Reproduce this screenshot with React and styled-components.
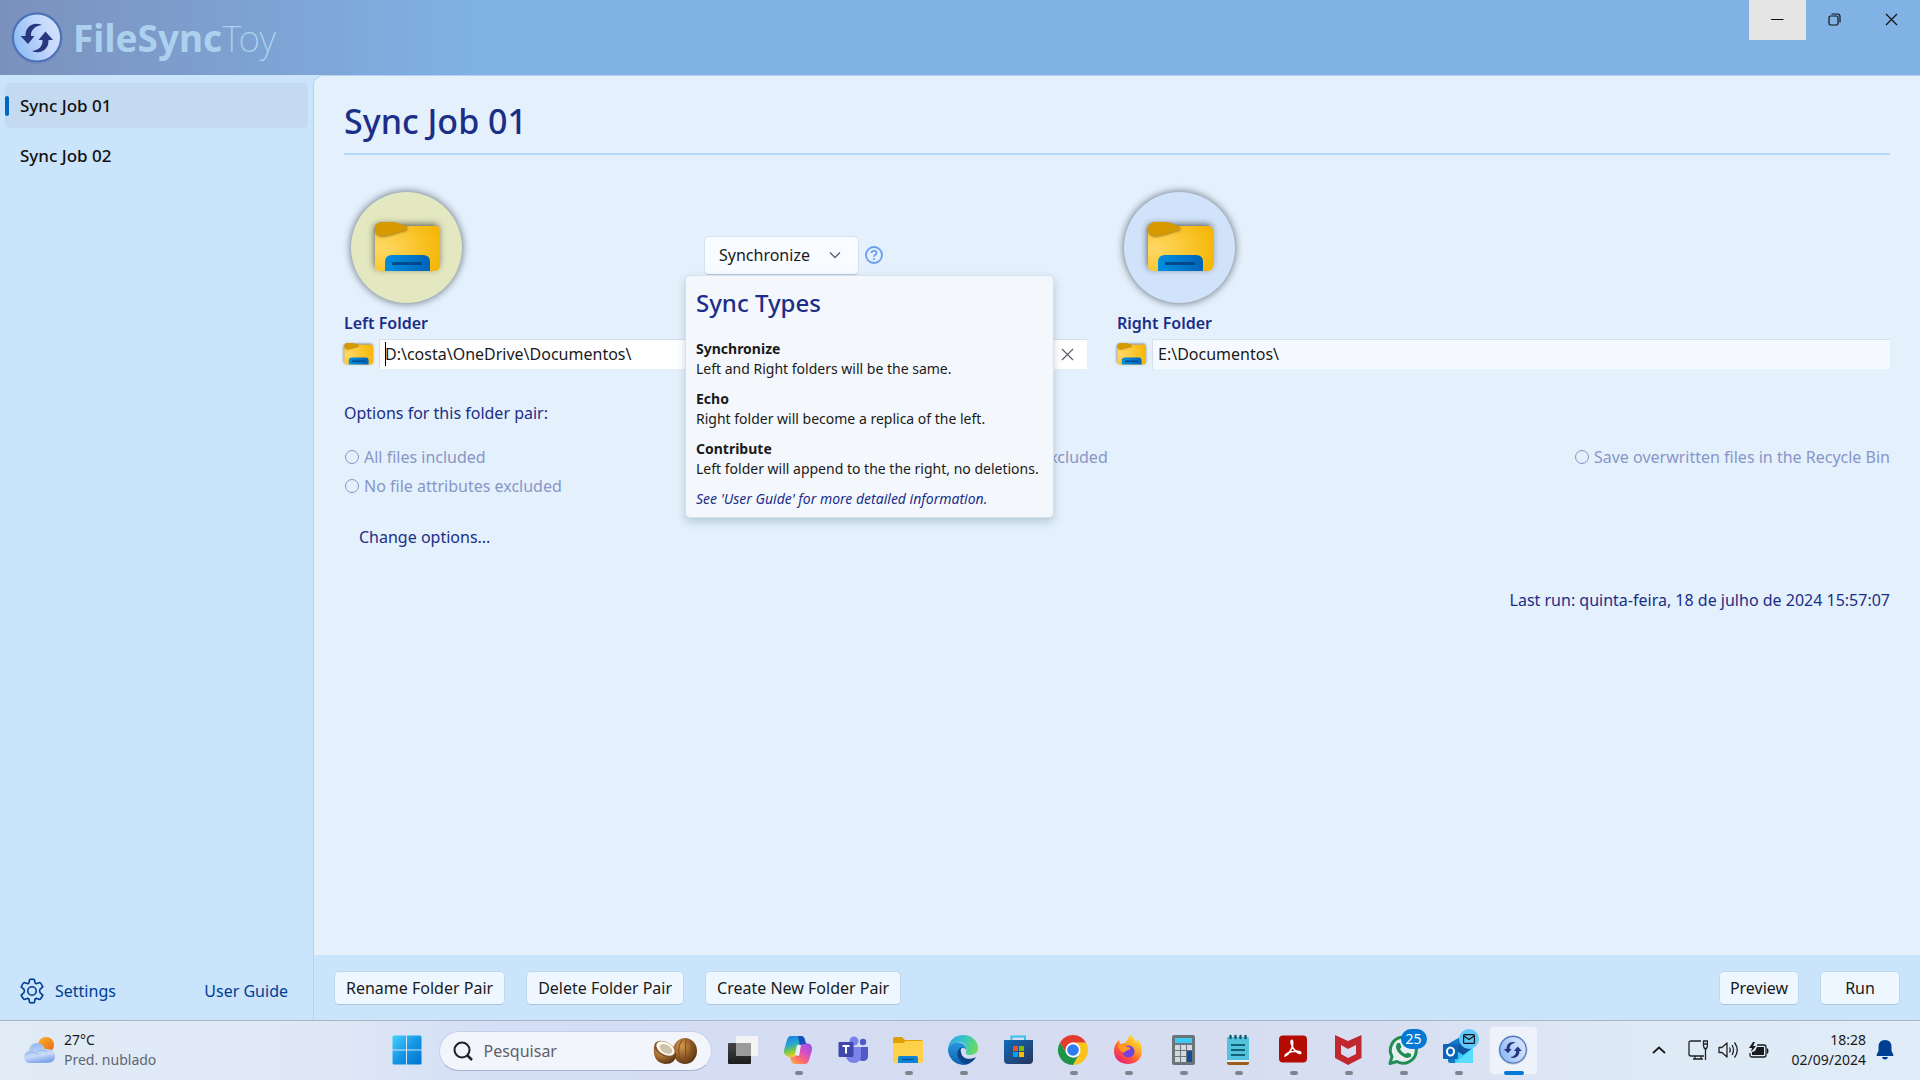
import React, { useId } from "react";
import styled, { createGlobalStyle, css } from "styled-components";

const GlobalStyle = createGlobalStyle`
  *, *::before, *::after { box-sizing: border-box; }
  body { margin: 0; background: #cae4fb; }
  body, button, input, select { font-family: "Noto Sans", "Open Sans", sans-serif; }
  button, input, select { font-size: 16px; margin: 0; color: inherit; }
  h1, h2, p, dl, dt, dd, ul { margin: 0; padding: 0; }
  svg { display: block; }
`;

const Page = styled.div`
  min-height: 100vh;
  display: grid;
  grid-template-rows: auto 1fr auto;
  font-size: 16px;
  line-height: 24px;
  color: #1a1a1a;
`;

/* ---------- title bar ---------- */
const TitleBar = styled.header`
  display: flex;
  align-items: flex-start;
  justify-content: space-between;
  height: 75px;
  background: linear-gradient(90deg, #7b91bd 0, #80b2e6 490px);
`;
const Brand = styled.div`
  display: flex;
  align-items: center;
  gap: 9px;
  height: 75px;
  padding-left: 10px;
`;
const BrandName = styled.span`
  font-size: 37px;
  line-height: 48px;
  font-weight: 700;
  color: #acd1ee;
`;
const BrandLight = styled.span`
  font-weight: 200;
`;
const WindowButtons = styled.div`
  display: flex;
`;
const WindowButton = styled.button`
  display: grid;
  place-items: center;
  width: 57px;
  height: 40px;
  padding: 0 0 2px;
  border: 0;
  background: ${(p) => (p.$active ? "#e5e5e5" : "transparent")};
`;

/* ---------- body ---------- */
const Body = styled.div`
  display: grid;
  grid-template-columns: 313px 1fr;
  background: #cae4fb;
`;
const Sidebar = styled.aside`
  display: flex;
  flex-direction: column;
  justify-content: space-between;
  padding: 8px 5px 13px;
`;
const JobList = styled.nav`
  display: flex;
  flex-direction: column;
  gap: 5px;
`;
const JobItem = styled.button`
  display: flex;
  align-items: center;
  gap: 11px;
  height: 45px;
  padding: 0;
  border: 0;
  border-radius: 5px;
  font-size: 17px;
  font-weight: 500;
  color: #111;
  background: ${(p) => (p.$active ? "#c4daf1" : "transparent")};
  &::before {
    content: "";
    width: 4px;
    height: 20px;
    border-radius: 2px;
    background: ${(p) => (p.$active ? "#0067c0" : "transparent")};
  }
`;
const SidebarFooter = styled.div`
  display: flex;
  align-items: center;
  justify-content: space-between;
  padding: 0 20px 0 14px;
`;
const SideLink = styled.a`
  display: flex;
  align-items: center;
  gap: 10px;
  height: 32px;
  color: #003e92;
  text-decoration: none;
`;
const Main = styled.main`
  display: grid;
  grid-template-rows: 1fr auto;
  border: solid #b5d2ee;
  border-width: 1px 0 0 1px;
  border-top-left-radius: 10px;
  overflow: hidden;
`;
const Content = styled.section`
  padding: 18px 30px;
  background: #e4f0fc;
  color: #1b2e88;
`;
const Heading = styled.h1`
  font-size: 34px;
  line-height: 54px;
  font-weight: 500;
  height: 61px;
  border-bottom: 2px solid #b5d8fb;
`;
const FolderPair = styled.div`
  display: grid;
  grid-template-columns: 1fr 1fr;
  padding-top: 36px;
`;
const FolderSide = styled.div`
  padding-right: ${(p) => (p.$inner ? "30px" : "0")};
`;
const FolderTop = styled.div`
  display: flex;
  align-items: center;
  gap: 242px;
  height: 112px;
  padding-left: 7px;
`;
const FolderDisc = styled.div`
  display: grid;
  place-items: center;
  width: 111px;
  height: 111px;
  border-radius: 50%;
  background: ${(p) => p.$color};
  box-shadow: 0 0 7px 1px rgba(60, 70, 80, 0.65);
`;
const FolderLabel = styled.label`
  display: block;
  height: 36px;
  padding-top: 8px;
  font-weight: 600;
`;
const PathRow = styled.div`
  display: flex;
  align-items: center;
  gap: 6px;
`;
const PathField = styled.div`
  flex: 1;
  display: flex;
  align-items: center;
  height: 30px;
  border: solid #d3e1ee;
  border-width: 1px 0 0 1px;
  background: ${(p) => (p.$active ? "#ffffff" : "#f6fafe")};
`;
const PathInput = styled.input`
  flex: 1;
  min-width: 0;
  height: 29px;
  padding: 0 5px 2px;
  border: 0;
  outline: 0;
  color: #1a1a1a;
  background: transparent;
  ${(p) =>
    p.$caret &&
    css`
      background: linear-gradient(#000, #000) 5px 2px / 1px 24px no-repeat;
    `}
`;
const ClearButton = styled.button`
  display: grid;
  place-items: center;
  width: 40px;
  height: 29px;
  padding: 0;
  border: 0;
  background: transparent;
`;

const TypePicker = styled.div`
  position: relative;
  display: flex;
  align-items: center;
  gap: 6px;
  padding-top: 16px;
`;
const SelectBox = styled.div`
  display: grid;
  align-items: center;
  width: 155px;
  & > * { grid-area: 1 / 1; }
  & > svg { justify-self: end; margin-right: 18px; pointer-events: none; }
`;
const TypeSelect = styled.select`
  appearance: none;
  width: 100%;
  height: 39px;
  padding: 0 14px;
  border: 1px solid #d3e2f0;
  border-bottom-color: #b3c4d6;
  border-radius: 5px;
  color: #1a1a1a;
  background: #f8fbff;
`;
const HelpButton = styled.button`
  padding: 0;
  border: 0;
  background: transparent;
`;
const HelpPanel = styled.div`
  position: absolute;
  left: -19px;
  top: 55px;
  z-index: 1;
  width: 369px;
  padding: 8px 10px;
  border: 1px solid #d4e0ea;
  border-radius: 5px;
  background: #f4f8fc;
  box-shadow: 0 4px 8px rgba(60, 90, 120, 0.25);
  font-size: 14px;
  line-height: 20px;
  color: #1a1a1a;
  white-space: nowrap;
`;
const HelpTitle = styled.h2`
  padding-bottom: 17px;
  font-size: 24px;
  line-height: 38px;
  font-weight: 500;
  color: #1b2e88;
`;
const HelpTerm = styled.dt`
  font-weight: 700;
`;
const HelpText = styled.dd`
  margin: 0 0 10px;
`;
const HelpNote = styled.p`
  font-style: italic;
  color: #1b2e88;
`;

const OptionsTitle = styled.p`
  padding: 32px 0 17px;
`;
const Options = styled.div`
  display: grid;
  grid-template-columns: 1fr 1fr 1fr;
`;
const OptionColumn = styled.div`
  display: flex;
  flex-direction: column;
  align-items: ${(p) => (p.$end ? "flex-end" : "flex-start")};
  padding-left: ${(p) => (p.$indent ? "46px" : "0")};
`;
const Option = styled.label`
  display: flex;
  align-items: center;
  gap: 5px;
  height: 29px;
  color: #8896c8;
`;
const OptionMark = styled.input`
  appearance: none;
  width: 14px;
  height: 14px;
  margin-left: 1px;
  border: 1px solid #8896c8;
  border-radius: 50%;
`;
const ChangeLink = styled.a`
  display: inline-block;
  margin: 25px 15px 39px;
  color: #1b2e88;
  text-decoration: none;
`;
const LastRun = styled.p`
  text-align: right;
`;
const ActionBar = styled.footer`
  display: flex;
  justify-content: space-between;
  align-items: flex-start;
  height: 65px;
  padding: 16px 20px 0;
  background: #cae4fb;
`;
const ActionGroup = styled.div`
  display: flex;
  gap: 21px;
`;
const ActionButton = styled.button`
  height: 34px;
  min-width: 80px;
  padding: 0 ${(p) => (p.$compact ? "9px" : "11px")};
  border: 1px solid #c0d8ee;
  border-bottom-color: #a9c4de;
  border-radius: 5px;
  background: #eef6ff;
  white-space: nowrap;
`;

/* ---------- taskbar ---------- */
const Taskbar = styled.div`
  display: grid;
  grid-template-columns: 1fr auto 1fr;
  align-items: center;
  height: 60px;
  border-top: 1px solid #adb5c4;
  background: linear-gradient(90deg, #e0ebf6 0, #dfe9f6 16%, #d4def5 26%, #d5dcf1 50%, #d8def1 72%, #dee9f6 84%, #e0ecf8 100%);
`;
const Weather = styled.div`
  display: flex;
  align-items: center;
  gap: 8px;
  padding: 0 0 2px 24px;
  font-size: 14px;
  line-height: 20px;
`;
const Muted = styled.div`
  color: #5f6670;
`;
const Apps = styled.div`
  display: flex;
  align-items: center;
`;
const AppButton = styled.button`
  position: relative;
  display: grid;
  place-items: center;
  width: 55px;
  height: 59px;
  padding: 0 0 1px;
  border: 0;
  background: transparent;
  & > svg { position: relative; }
  ${(p) =>
    p.$running &&
    css`
      &::after {
        content: "";
        position: absolute;
        left: ${p.$active ? "18px" : "24px"};
        bottom: 5px;
        width: ${p.$active ? "20px" : "8px"};
        height: 4px;
        border-radius: 2px;
        background: ${p.$active ? "#0078d4" : "#7f838d"};
      }
    `}
  ${(p) =>
    p.$active &&
    css`
      &::before {
        content: "";
        position: absolute;
        inset: 5px 3px;
        border: 1px solid #e3e7f3;
        border-radius: 5px;
        background: #eef2fb;
      }
    `}
`;
const Badge = styled.span`
  position: absolute;
  z-index: 1;
  left: ${(p) => (p.$wide ? "25px" : "28px")};
  top: 8px;
  display: grid;
  place-items: center;
  width: ${(p) => (p.$wide ? "26px" : "20px")};
  height: 20px;
  border-radius: 10px;
  font-size: 14px;
  line-height: 20px;
  color: #fff;
  background: ${(p) => p.$color};
`;
const Search = styled.label`
  display: flex;
  align-items: center;
  gap: 11px;
  width: 273px;
  height: 40px;
  margin: 0 4px;
  padding: 0 13px;
  border: 1px solid #c5d0e8;
  border-bottom-color: #aab4cc;
  border-radius: 20px;
  background: #f3f5fd;
`;
const SearchInput = styled.input`
  flex: 1;
  min-width: 0;
  padding: 0;
  border: 0;
  background: transparent;
  &::placeholder { color: #5f6068; opacity: 1; }
`;
const Tray = styled.div`
  display: flex;
  align-items: center;
  justify-content: flex-end;
  gap: 10px;
  padding: 0 26px 2px 0;
`;
const TrayButton = styled.button`
  padding: 0;
  border: 0;
  background: transparent;
`;
const Chevron = styled(TrayButton)`
  margin-right: 12px;
`;
const Clock = styled.div`
  padding-left: 13px;
  font-size: 14px;
  line-height: 20px;
  text-align: right;
`;

/* ---------- drawings ---------- */
function SyncIcon({ size }) {
  const id = useId();
  return (
    <svg width={size} height={size} viewBox="0 0 54 54" aria-hidden="true">
      <defs>
        <linearGradient id={id} x1="0" y1="0.7" x2="1" y2="0.3">
          <stop offset="0" stopColor="#8ab9f4" />
          <stop offset="0.6" stopColor="#c1d7fb" />
          <stop offset="1" stopColor="#d5e2fd" />
        </linearGradient>
      </defs>
      <circle cx="27" cy="27" r="26" fill="#7186b4" opacity="0.5" />
      <circle cx="27" cy="26.500" r="24" fill={`url(#${id})`} stroke="#4a72b6" strokeWidth="2" />
      <path d="M32 14C23 10 15 16 15.500 25H10.500L18 33L24.500 25H21C20.500 19 25 15 32 14Z" fill="#293680" />
      <path d="M22 40C31 44 39 38 38.500 29H43L35.500 20.500L28.500 29H32.500C33 35 29 39 22 40Z" fill="#293680" />
    </svg>
  );
}

function FolderIcon({ width, height, shadow = 2 }) {
  const id = useId();
  return (
    <svg width={width} height={height} viewBox="0 0 66 50" overflow="visible" aria-hidden="true">
      <defs>
        <radialGradient id={`${id}f`} cx="0.1" cy="0.5" r="1">
          <stop offset="0" stopColor="#ffd966" />
          <stop offset="1" stopColor="#f5b400" />
        </radialGradient>
        <linearGradient id={`${id}b`}>
          <stop offset="0" stopColor="#0090e0" />
          <stop offset="1" stopColor="#0063b8" />
        </linearGradient>
        <filter id={`${id}s`} x="-30%" y="-30%" width="160%" height="160%">
          <feDropShadow dx="-1" dy="-2" stdDeviation={shadow} floodColor="#333" floodOpacity="0.7" />
        </filter>
        <filter id={`${id}t`} x="-30%" y="-30%" width="160%" height="180%">
          <feDropShadow dx="0" dy="1" stdDeviation="1" floodColor="#5a4200" floodOpacity="0.6" />
        </filter>
      </defs>
      <rect x="1" y="4" width="65" height="45" rx="5" fill={`url(#${id}f)`} filter={`url(#${id}s)`} />
      <path d="M8 0H18C23 0 28 3 32 4C34 5 34 7 32 8C26 9 17 13 9 14C4 14 1 11 1 7C1 3 4 0 8 0Z" fill="#d69a00" filter={`url(#${id}t)`} />
      <path d="M11 49V40Q11 33 18 33H49Q56 33 56 40V49Z" fill={`url(#${id}b)`} />
      <rect x="18" y="40" width="30" height="3" rx="1" fill="#00498c" />
    </svg>
  );
}

const GearIcon = () => (
  <svg width="26" height="26" viewBox="0 0 26 26" fill="none" stroke="#003e92" strokeWidth="1.600" strokeLinejoin="round" aria-hidden="true">
    <path d="M10.600 1.500Q13 .7 15.400 1.500L16 4.800Q16.600 5.700 17.700 5.600L20.900 4.500Q22.800 6.300 23.800 8.900L21.200 11.200Q20.100 13 21.200 14.800L23.800 17.100Q22.800 19.700 20.900 21.500L17.700 20.400Q16.600 20.300 16 21.200L15.400 24.500Q13 25.300 10.600 24.500L10 21.200Q9.400 20.300 8.300 20.400L5.100 21.500Q3.200 19.700 2.200 17.100L4.800 14.800Q5.900 13 4.800 11.200L2.200 8.900Q3.200 6.300 5.100 4.500L8.300 5.600Q9.400 5.700 10 4.800Z" />
    <circle cx="13" cy="13" r="4.200" />
  </svg>
);

const CrossIcon = ({ color = "#111" }) => (
  <svg width="13" height="13" viewBox="0 0 13 13" stroke={color} strokeWidth="1.200" aria-hidden="true">
    <path d="M1 1L12 12M12 1L1 12" />
  </svg>
);

const icons = {
  start: (
    <>
      <defs>
        <linearGradient id="win" x1="0" y1="0" x2="1" y2="1">
          <stop offset="0" stopColor="#45d2ff" />
          <stop offset="0.5" stopColor="#1597e5" />
          <stop offset="1" stopColor="#0072d0" />
        </linearGradient>
      </defs>
      <path d="M2 0.500H14V14.500H0.500V2Q.5 .5 2 .5ZM15 .5H28Q29.500 .5 29.500 2V14.500H15ZM.5 15.500H14V29.500H2Q.5 29.500 .5 28ZM15 15.500H29.500V28Q29.500 29.500 28 29.500H15Z" fill="url(#win)" />
    </>
  ),
  taskview: (
    <>
      <defs>
        <linearGradient id="tvA" x1="0" y1="0" x2="0" y2="1">
          <stop offset="0" stopColor="#444" />
          <stop offset="1" stopColor="#1c1c1c" />
        </linearGradient>
      </defs>
      <rect x="0" y="8" width="23" height="21" rx="1" fill="url(#tvA)" />
      <rect x="8" y="1" width="22" height="20" rx="1" fill="#f4f4f4" />
      <rect x="8" y="8" width="15" height="13" fill="#9b9b9b" />
    </>
  ),
  copilot: (
    <>
      <defs>
        <linearGradient id="cpA" x1="0" y1="0" x2="0.3" y2="1">
          <stop offset="0" stopColor="#1a78e8" />
          <stop offset="0.45" stopColor="#28a7d0" />
          <stop offset="0.7" stopColor="#72c84c" />
          <stop offset="1" stopColor="#f6d01c" />
        </linearGradient>
        <linearGradient id="cpB" x1="1" y1="0" x2="0.2" y2="1">
          <stop offset="0" stopColor="#8a52ee" />
          <stop offset="0.45" stopColor="#d84fc4" />
          <stop offset="0.75" stopColor="#ff6a6a" />
          <stop offset="1" stopColor="#ffa64a" />
        </linearGradient>
      </defs>
      <path d="M8 1H18Q21 1 22 5L23 9H20Q16 9 15 13L12 20Q11 24 6 22Q0 20 1 15L4 5Q5 1 8 1Z" fill="url(#cpA)" />
      <path d="M22 29H12Q9 29 8 25L7 22H10Q13 22 14 18L17 11Q18 8 22 8Q30 8 29 15L26 25Q25 29 22 29Z" fill="url(#cpB)" />
      <path d="M15 1H18Q21 1 22 5L23 9H20Q18 9 17 11Z" fill="#1650bd" />
      <path d="M14 10L18 10L16 21L12 20Z" fill="#e9edfc" />
    </>
  ),
  teams: (
    <>
      <circle cx="16" cy="6" r="4.500" fill="#7b83eb" />
      <circle cx="25" cy="7" r="3.200" fill="#5059c9" />
      <path d="M20 12H30V21Q30 26 25 26Q20 26 20 21Z" fill="#5059c9" />
      <path d="M8 12H23V21Q23 28 16 28Q9 28 8 21Z" fill="#7b83eb" />
      <rect x="0.500" y="7" width="15" height="15" rx="1" fill="#3f47ad" />
      <path d="M4.500 11H11.500M8 11V18.500" stroke="#fff" strokeWidth="2" />
    </>
  ),
  explorer: (
    <>
      <path d="M0 4Q0 2 2 2H9L12 5H28Q30 5 30 7V12H0Z" fill="#dfa006" />
      <path d="M0 8H10L13 6H30V26Q30 28 28 28H2Q0 28 0 26Z" fill="#ffd04a" />
      <path d="M5 28V23Q5 21 7 21H23Q25 21 25 23V28Z" fill="#0d85d4" />
      <path d="M9 24.500H21" stroke="#0b559c" strokeWidth="1.500" />
    </>
  ),
  edge: (
    <>
      <defs>
        <linearGradient id="edA" x1="0" y1="0.300" x2="1" y2="0.500">
          <stop offset="0" stopColor="#35a8e8" />
          <stop offset="0.5" stopColor="#36c5c8" />
          <stop offset="1" stopColor="#6bdc55" />
        </linearGradient>
        <linearGradient id="edB" x1="0" y1="0" x2="0" y2="1">
          <stop offset="0" stopColor="#249ae0" />
          <stop offset="1" stopColor="#1160b0" />
        </linearGradient>
      </defs>
      <path d="M0 14C1 5 7 0 15 0C24 0 30 6 30 13C30 18 26 20 22 20C19 20 17 19 18 17C20 11 16 7 10 7C5 7 2 10 0 14Z" fill="url(#edA)" />
      <path d="M0 14C2 8 8 6 13 8C17 9 19 13 18 15C17 12 11 12 11 18C11 25 18 27 22 28C18 31 12 30 8 28C3 25 0 20 0 14Z" fill="url(#edB)" />
      <path d="M11 14C8 17 9 24 15 28C20 31 26 26 28 22C23 25 14 25 13 17C12 15 13 13 15 12C13 12 12 13 11 14Z" fill="#0e4388" />
    </>
  ),
  store: (
    <>
      <defs>
        <linearGradient id="stA" x1="0" y1="0" x2="1" y2="1">
          <stop offset="0" stopColor="#0f6bb8" />
          <stop offset="1" stopColor="#28335a" />
        </linearGradient>
      </defs>
      <path d="M8.500 8V1.500H22V8" fill="none" stroke="#36c2ee" strokeWidth="2" />
      <path d="M1 5H30V25Q30 29 26 29H5Q1 29 1 25Z" fill="url(#stA)" />
      <path d="M10 11H15V16H10Z" fill="#f25022" />
      <path d="M16 11H21V16H16Z" fill="#7fba00" />
      <path d="M10 17H15V22H10Z" fill="#00a4ef" />
      <path d="M16 17H21V22H16Z" fill="#ffb900" />
    </>
  ),
  chrome: (
    <>
      <path d="M15 15L28 7.500A15 15 0 0 1 15 30L21.500 18.500Z" fill="#fcc31e" />
      <path d="M15 7.500H28.500L21 19Z" fill="#fcc31e" />
      <path d="M2 7.500A15 15 0 0 1 28 7.500H15Q11 7.500 8.500 12L8.500 18.500Z" fill="#e33b2e" />
      <path d="M2 7.500L8.500 18.500Q11 22 15 22.500Q18 22.500 20 21L15 30A15 15 0 0 1 2 7.500Z" fill="#1e9447" />
      <circle cx="15" cy="15" r="7.500" fill="#fff" />
      <circle cx="15" cy="15" r="5.800" fill="#2f7cf0" />
    </>
  ),
  firefox: (
    <>
      <defs>
        <linearGradient id="ffA" x1="0.900" y1="0" x2="0.200" y2="1">
          <stop offset="0" stopColor="#fff04a" />
          <stop offset="0.35" stopColor="#ffb327" />
          <stop offset="0.65" stopColor="#ff5b36" />
          <stop offset="1" stopColor="#e5197e" />
        </linearGradient>
      </defs>
      <path d="M17 0C21 2 22 5 23 7C24 6 24 5 24 4C28 8 29 12 29 16C29 24 23 29 15 29C7 29 1 24 1 16C1 11 3 8 6 5L7 9L12 8C14 6 15 3 17 0Z" fill="url(#ffA)" />
      <circle cx="15.500" cy="16.500" r="6" fill="#7542dc" />
      <path d="M5 10C9 9 12 10 14 12C17 12 18 13 17 14C15 16 12 15 11 18C8 16 5 14 5 10Z" fill="#ff9a28" />
    </>
  ),
  calc: (
    <>
      <rect x="4" y="0" width="23" height="30" rx="2" fill="#6b7479" />
      <rect x="7" y="3" width="17" height="5" fill="#40c9f5" />
      <path d="M7 10H12V15H7ZM13 10H18V15H13ZM19 10H24V15H19ZM7 16H12V21H7ZM13 16H18V21H13ZM7 22H12V27H7ZM13 22H18V27H13Z" fill="#d3dadf" />
      <path d="M19 16H24V27H19Z" fill="#124d93" />
    </>
  ),
  notepad: (
    <>
      <rect x="4" y="2" width="22" height="25" rx="1" fill="#53c2dc" />
      <path d="M4 26H26V28Q26 30 24 30H6Q4 30 4 28Z" fill="#9b5c1d" />
      <path d="M4 25H26V27H4Z" fill="#e6eef2" />
      <path d="M8 10H22M8 15H22M8 20H22" stroke="#136278" strokeWidth="2" />
      <path d="M7.500 1V3M12.500 1V3M17.500 1V3M22.500 1V3" stroke="#14566c" strokeWidth="2.400" strokeLinecap="round" />
    </>
  ),
  acrobat: (
    <>
      <rect x="1" y="0.500" width="28" height="27" rx="4" fill="#b30b00" />
      <path d="M7 21C10 20 16 13 14.500 6C13.500 4 12 7 14 11C16 15 20 19 22.500 18.500C24 17 20 15.500 15 16.500C11 17 7 19 7 21Z" fill="none" stroke="#fff" strokeWidth="1.600" />
    </>
  ),
  mcafee: <path d="M2 0L15 6L28.500 0V23L15 30L2 23ZM8 10V19L15 23L23 19V10L15 14Z" fill="#c0282d" fillRule="evenodd" />,
  whatsapp: (
    <>
      <path d="M2 28.500L4 21.500A13 13 0 1 1 9 26.500Z" fill="#e9efee" stroke="#1f8d55" strokeWidth="3" strokeLinejoin="round" />
      <path d="M9.500 8L12 8L13.500 12L12 14Q14 18 18 19L19.500 17.500L23 19V21.500Q20 24 16 22Q10 19 8 13Q8 9 9.500 8Z" fill="#1f8d55" />
    </>
  ),
  outlook: (
    <>
      <path d="M5 9L17 2L30 10V26Q30 28 28 28H7Q5 28 5 26Z" fill="#1479ca" />
      <path d="M12 13L30 10V26Q30 28 28 28H12Z" fill="#36c8f5" />
      <path d="M12 28L30 13V26Q30 28 28 28Z" fill="#5adcff" />
      <path d="M16 8H28V14L20 20L14 16Z" fill="#12539b" />
      <rect x="0" y="9" width="15" height="15" rx="1" fill="#0c63b8" />
      <ellipse cx="7.500" cy="16.500" rx="3.500" ry="4" fill="none" stroke="#fff" strokeWidth="2" />
    </>
  ),
};

const taskApps = [
  { id: "taskview", name: "Task View" },
  { id: "copilot", name: "Copilot", running: true },
  { id: "teams", name: "Teams" },
  { id: "explorer", name: "Explorer", running: true },
  { id: "edge", name: "Edge", running: true },
  { id: "store", name: "Store" },
  { id: "chrome", name: "Chrome", running: true },
  { id: "firefox", name: "Firefox", running: true },
  { id: "calc", name: "Calculator", running: true },
  { id: "notepad", name: "Notepad", running: true },
  { id: "acrobat", name: "Acrobat", running: true },
  { id: "mcafee", name: "McAfee", running: true },
  { id: "whatsapp", name: "WhatsApp", running: true, badge: "25" },
  { id: "outlook", name: "Outlook", running: true, mail: true },
];

const AppIcon = ({ name }) => (
  <svg width="30" height="30" viewBox="0 0 30 30" overflow="visible" aria-hidden="true">
    {icons[name]}
  </svg>
);

const Coconuts = () => (
  <svg width="46" height="28" viewBox="0 0 46 28" aria-hidden="true">
    <defs>
      <radialGradient id="coco" cx="0.35" cy="0.3" r="0.8">
        <stop offset="0" stopColor="#d39a4c" />
        <stop offset="0.5" stopColor="#98602a" />
        <stop offset="1" stopColor="#4a2b10" />
      </radialGradient>
    </defs>
    <ellipse cx="33" cy="14" rx="12" ry="13" fill="url(#coco)" />
    <path d="M30 3Q24 12 29 25M34 2Q33 12 34 26M38 4Q42 13 38 24" stroke="#7c4c1e" fill="none" />
    <path d="M2 9Q0 25 13 27Q24 27 24 17Z" fill="url(#coco)" />
    <ellipse cx="13" cy="12" rx="11.500" ry="7" transform="rotate(30 13 12)" fill="#80502a" />
    <ellipse cx="13.500" cy="11.500" rx="10" ry="6" transform="rotate(30 13.500 11.500)" fill="#fffaf0" />
    <ellipse cx="14" cy="12" rx="7" ry="4" transform="rotate(30 14 12)" fill="#cfc3ad" />
  </svg>
);

const WeatherIcon = () => (
  <svg width="32" height="26" viewBox="0 0 32 26" aria-hidden="true">
    <defs>
      <linearGradient id="sun" x1="0" y1="0" x2="1" y2="1">
        <stop offset="0" stopColor="#f8b62c" />
        <stop offset="1" stopColor="#ec6410" />
      </linearGradient>
      <linearGradient id="cloud" x1="0" y1="0" x2="0.300" y2="1">
        <stop offset="0" stopColor="#89b0ee" />
        <stop offset="0.7" stopColor="#c9daf8" />
        <stop offset="1" stopColor="#86a8ec" />
      </linearGradient>
    </defs>
    <circle cx="22" cy="8" r="8" fill="url(#sun)" />
    <path d="M7 26A6 6 0 0 1 5 14Q6 6 13 6Q19 6 21 12Q31 11 31 19Q31 26 24 26Z" fill="url(#cloud)" />
    <path d="M2 18Q8 12 14 18M13 15Q18 11 23 15" stroke="#7ea4e6" fill="none" opacity="0.600" />
  </svg>
);

const OptionItem = ({ children }) => (
  <Option>
    <OptionMark type="radio" disabled />
    {children}
  </Option>
);

export default function App() {
  return (
    <Page>
      <GlobalStyle />
      <TitleBar>
        <Brand>
          <SyncIcon size={54} />
          <BrandName>
            FileSync<BrandLight>Toy</BrandLight>
          </BrandName>
        </Brand>
        <WindowButtons>
          <WindowButton $active aria-label="Minimize">
            <svg width="13" height="13" stroke="#111" strokeWidth="1" aria-hidden="true"><path d="M0 6.500H12.500" /></svg>
          </WindowButton>
          <WindowButton aria-label="Restore">
            <svg width="13" height="13" viewBox="0 0 13 13" fill="none" stroke="#111" strokeWidth="1.200" aria-hidden="true">
              <rect x="1" y="3" width="9" height="9" rx="1.500" />
              <path d="M3.500 1H9.500Q12 1 12 3.500V9.500" />
            </svg>
          </WindowButton>
          <WindowButton aria-label="Close"><CrossIcon /></WindowButton>
        </WindowButtons>
      </TitleBar>

      <Body>
        <Sidebar>
          <JobList>
            <JobItem $active>Sync Job 01</JobItem>
            <JobItem>Sync Job 02</JobItem>
          </JobList>
          <SidebarFooter>
            <SideLink href="#settings"><GearIcon />Settings</SideLink>
            <SideLink href="#guide">User Guide</SideLink>
          </SidebarFooter>
        </Sidebar>

        <Main>
          <Content>
            <Heading>Sync Job 01</Heading>
            <FolderPair>
              <FolderSide $inner>
                <FolderTop>
                  <FolderDisc $color="#e3e8c0"><FolderIcon width={66} height={50} shadow={3} /></FolderDisc>
                  <TypePicker>
                    <SelectBox>
                      <TypeSelect aria-label="Sync type" defaultValue="Synchronize">
                        <option>Synchronize</option>
                        <option>Echo</option>
                        <option>Contribute</option>
                      </TypeSelect>
                      <svg width="12" height="8" viewBox="0 0 12 8" fill="none" stroke="#5c6066" strokeWidth="1.300" aria-hidden="true"><path d="M1 1.500L6 6.500L11 1.500" /></svg>
                    </SelectBox>
                    <HelpButton aria-label="Help">
                      <svg width="18" height="18" viewBox="0 0 18 18" fill="none" stroke="#6a9df2" aria-hidden="true">
                        <circle cx="9" cy="9" r="8" strokeWidth="1.800" />
                        <path d="M6.500 7Q6.500 4.800 9 4.800Q11.500 4.800 11.500 7Q11.500 8.200 10 9Q9 9.500 9 10.800M9 12.200V14" strokeWidth="1.800" />
                      </svg>
                    </HelpButton>
                    <HelpPanel>
                      <HelpTitle>Sync Types</HelpTitle>
                      <dl>
                        <HelpTerm>Synchronize</HelpTerm>
                        <HelpText>Left and Right folders will be the same.</HelpText>
                        <HelpTerm>Echo</HelpTerm>
                        <HelpText>Right folder will become a replica of the left.</HelpText>
                        <HelpTerm>Contribute</HelpTerm>
                        <HelpText>Left folder will append to the the right, no deletions.</HelpText>
                      </dl>
                      <HelpNote>See 'User Guide' for more detailed information.</HelpNote>
                    </HelpPanel>
                  </TypePicker>
                </FolderTop>
                <FolderLabel htmlFor="left-path">Left Folder</FolderLabel>
                <PathRow>
                  <FolderIcon width={29} height={22} />
                  <PathField $active>
                    <PathInput id="left-path" $caret defaultValue={"D:\\costa\\OneDrive\\Documentos\\"} />
                    <ClearButton aria-label="Clear"><CrossIcon color="#5c6066" /></ClearButton>
                  </PathField>
                </PathRow>
              </FolderSide>
              <FolderSide>
                <FolderTop>
                  <FolderDisc $color="#d1e3fa"><FolderIcon width={66} height={50} shadow={3} /></FolderDisc>
                </FolderTop>
                <FolderLabel htmlFor="right-path">Right Folder</FolderLabel>
                <PathRow>
                  <FolderIcon width={29} height={22} />
                  <PathField>
                    <PathInput id="right-path" defaultValue={"E:\\Documentos\\"} />
                  </PathField>
                </PathRow>
              </FolderSide>
            </FolderPair>

            <OptionsTitle>Options for this folder pair:</OptionsTitle>
            <Options>
              <OptionColumn>
                <OptionItem>All files included</OptionItem>
                <OptionItem>No file attributes excluded</OptionItem>
              </OptionColumn>
              <OptionColumn $indent>
                <OptionItem>No sub-folders excluded</OptionItem>
              </OptionColumn>
              <OptionColumn $end>
                <OptionItem>Save overwritten files in the Recycle Bin</OptionItem>
              </OptionColumn>
            </Options>
            <ChangeLink href="#options">Change options...</ChangeLink>
            <LastRun>Last run: quinta-feira, 18 de julho de 2024 15:57:07</LastRun>
          </Content>
          <ActionBar>
            <ActionGroup>
              <ActionButton>Rename Folder Pair</ActionButton>
              <ActionButton>Delete Folder Pair</ActionButton>
              <ActionButton>Create New Folder Pair</ActionButton>
            </ActionGroup>
            <ActionGroup>
              <ActionButton $compact>Preview</ActionButton>
              <ActionButton $compact>Run</ActionButton>
            </ActionGroup>
          </ActionBar>
        </Main>
      </Body>

      <Taskbar>
        <Weather>
          <WeatherIcon />
          <div>
            <div>27°C</div>
            <Muted>Pred. nublado</Muted>
          </div>
        </Weather>
        <Apps>
          <AppButton aria-label="Start"><AppIcon name="start" /></AppButton>
          <Search>
            <svg width="20" height="20" viewBox="0 0 20 20" fill="none" stroke="#222" strokeWidth="2" aria-hidden="true">
              <circle cx="9" cy="9" r="7.500" />
              <path d="M14 14L19 19" strokeWidth="2.500" />
            </svg>
            <SearchInput placeholder="Pesquisar" aria-label="Pesquisar" />
            <Coconuts />
          </Search>
          {taskApps.map((app) => (
            <AppButton key={app.id} aria-label={app.name} $running={app.running}>
              <AppIcon name={app.id} />
              {app.badge && <Badge $wide $color="#0078d4">{app.badge}</Badge>}
              {app.mail && (
                <Badge $color="#5cc8fb">
                  <svg width="12" height="10" viewBox="0 0 12 10" fill="none" stroke="#111" strokeWidth="1.200" aria-hidden="true">
                    <rect x="0.600" y="0.600" width="10.800" height="8.800" rx="1" />
                    <path d="M1 2L6 5.500L11 2" />
                  </svg>
                </Badge>
              )}
            </AppButton>
          ))}
          <AppButton aria-label="FileSyncToy" $running $active><SyncIcon size={30} /></AppButton>
        </Apps>
        <Tray>
          <Chevron aria-label="Show hidden icons">
            <svg width="14" height="8" viewBox="0 0 14 8" fill="none" stroke="#1a1a1a" strokeWidth="1.800" aria-hidden="true"><path d="M1 7L7 1.500L13 7" /></svg>
          </Chevron>
          <TrayButton aria-label="Network">
            <svg width="20" height="20" viewBox="0 0 20 20" fill="none" stroke="#222" strokeWidth="1.300" aria-hidden="true">
              <path d="M13 1H3Q1 1 1 3V14Q1 16 3 16H16M7 16V19M13 16V19M5 19H15M17.500 9V20" />
              <path d="M15.500 1H19.500V6L18.500 8.500H16.500L15.500 6ZM15.500 4H19.500" />
            </svg>
          </TrayButton>
          <TrayButton aria-label="Volume">
            <svg width="21" height="18" viewBox="0 0 21 18" fill="none" stroke="#222" strokeWidth="1.300" strokeLinejoin="round" aria-hidden="true">
              <path d="M1 6.500H4L9 2V16L4 11.500H1Z" />
              <path d="M11.500 6.500Q13 9 11.500 11.500M14 4Q17 9 14 14M16.500 1.500Q22 9 16.500 16.500" />
            </svg>
          </TrayButton>
          <TrayButton aria-label="Battery">
            <svg width="20" height="16" viewBox="0 0 20 16" fill="none" stroke="#1a1a1a" strokeWidth="1.300" aria-hidden="true">
              <path d="M8 3H15Q17 3 17 5V13Q17 15 15 15H3Q1 15 1 13V11" />
              <path d="M8 5H15V13H3V10L6 9Z" fill="#1a1a1a" stroke="none" />
              <path d="M18 6.500H19Q20 9 19 11.500H18Z" fill="#1a1a1a" stroke="none" />
              <path d="M4 0L0 6H3L2 10L7 4H4L6 0Z" fill="#1a1a1a" stroke="none" />
            </svg>
          </TrayButton>
          <Clock>
            <div>18:28</div>
            <div>02/09/2024</div>
          </Clock>
          <TrayButton aria-label="Notifications">
            <svg width="18" height="20" viewBox="0 0 18 20" fill="#003e92" aria-hidden="true">
              <path d="M9 0Q15.500 0 15.500 7V11L17.500 15Q17.500 16 16.500 16H1.500Q.5 16 .5 15L2.500 11V7Q2.500 0 9 0ZM6 17H12Q11.500 19.500 9 19.500Q6.500 19.500 6 17Z" />
            </svg>
          </TrayButton>
        </Tray>
      </Taskbar>
    </Page>
  );
}
